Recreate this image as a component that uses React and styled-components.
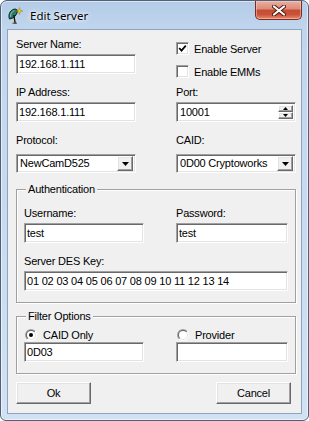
import React from "react";
import styled, { createGlobalStyle } from "styled-components";

const GlobalStyle = createGlobalStyle`
  html, body { margin: 0; padding: 0; background: #ffffff; }
  body {
    width: 309px; height: 421px; overflow: hidden;
    font-family: "Liberation Sans", Arial, sans-serif;
    font-size: 11px; color: #000;
  }
  #root { width: 309px; height: 421px; }
  * { box-sizing: border-box; }
`;

const Window = styled.div`
  width: 309px;
  height: 421px;
  display: flex;
  flex-direction: column;
  padding: 0 6px 6px 6px;
  border: 1px solid #4f6077;
  border-radius: 7px 7px 6px 6px;
  background: linear-gradient(180deg, #b3cbe7 0px, #c1d6ee 28px, #c8dbf0 55%, #d2e2f4 100%);
  box-shadow: inset 0 0 0 1px rgba(255, 255, 255, 0.55);
`;

const TitleBar = styled.div`
  height: 28px;
  display: flex;
  align-items: flex-start;
  flex-shrink: 0;
`;

const AppIcon = styled.svg`
  margin-top: 6px;
  flex-shrink: 0;
`;

const Title = styled.span`
  margin-top: 7px;
  margin-left: 7px;
  font-family: "Noto Sans", "Liberation Sans", sans-serif;
  font-size: 11.5px;
  line-height: 16px;
  color: #000;
  text-shadow: 0 0 6px rgba(255, 255, 255, 0.95), 0 0 3px #fff;
`;

const CloseButton = styled.div`
  margin-left: auto;
  width: 47px;
  height: 19px;
  border: 1px solid #7e2b1f;
  border-top: none;
  border-radius: 0 0 5px 5px;
  background: linear-gradient(180deg, #eab0a2 0%, #dc8a76 45%, #c54b33 50%, #c9533a 75%, #e58b6c 100%);
  box-shadow: inset 0 0 0 1px rgba(255, 220, 210, 0.45);
  display: flex;
  align-items: center;
  justify-content: center;
`;

const Client = styled.div`
  flex: 1;
  background: #f0f0f0;
  border: 1px solid #8ea3bc;
  padding: 8px 6px 0 8px;
  display: flex;
  flex-direction: column;
`;

const TopGrid = styled.div`
  display: grid;
  grid-template-columns: 120px 120px;
  grid-template-rows: 36px 36px auto;
  column-gap: 40px;
  row-gap: 12px;
`;

const Field = styled.div`
  display: flex;
  flex-direction: column;
  grid-column: ${(p) => (p.$span ? "1 / span 2" : "auto")};
`;

const Label = styled.span`
  display: block;
  line-height: 13px;
  height: 13px;
  letter-spacing: -0.2px;
  white-space: nowrap;
  margin-bottom: ${(p) => p.$gap ?? 3}px;
`;

const sunken = `
  border: 1px solid;
  border-color: #a0a0a0 #ffffff #ffffff #a0a0a0;
  box-shadow: inset 1px 1px 0 #696969, inset -1px -1px 0 #e3e3e3;
  background: #ffffff;
`;

const raised = `
  border: 1px solid;
  border-color: #ffffff #696969 #696969 #ffffff;
  box-shadow: inset -1px -1px 0 #a0a0a0, inset 1px 1px 0 #e3e3e3;
  background: #f0f0f0;
`;

const TextBox = styled.input`
  ${sunken}
  display: block;
  width: 100%;
  height: 20px;
  margin: ${(p) => p.$mt ?? 0}px 0 0 0;
  padding: 0 0 0 2px;
  font-family: "Liberation Sans", Arial, sans-serif;
  font-size: 11px;
  letter-spacing: -0.2px;
  color: #000;
  outline: none;
`;

const Combo = styled.div`
  ${sunken}
  height: 19px;
  display: flex;
  align-items: center;
  padding: 2px 2px 2px 3px;
  letter-spacing: -0.2px;
  white-space: nowrap;
`;

const ComboText = styled.span`
  flex: 1;
  overflow: hidden;
  line-height: 13px;
`;

const DropButton = styled.div`
  ${raised}
  width: 16px;
  height: 15px;
  display: flex;
  align-items: center;
  justify-content: center;
  flex-shrink: 0;
`;

const SpinBox = styled.div`
  ${sunken}
  height: 20px;
  display: flex;
  align-items: stretch;
  padding: 2px 2px 2px 3px;
  letter-spacing: -0.2px;
`;

const SpinText = styled.span`
  flex: 1;
  line-height: 14px;
`;

const SpinButtons = styled.div`
  display: flex;
  flex-direction: column;
  width: 15px;
`;

const SpinButton = styled.div`
  ${raised}
  flex: 1;
  display: flex;
  align-items: center;
  justify-content: center;
`;

const CheckList = styled.div`
  display: flex;
  flex-direction: column;
  gap: 10px;
  padding-top: 4px;
`;

const OptionRow = styled.div`
  display: flex;
  align-items: center;
  height: 13px;
  gap: ${(p) => p.$gap ?? 5}px;
  padding-left: ${(p) => p.$indent ?? 0}px;
  letter-spacing: -0.2px;
  white-space: nowrap;
`;

const CheckBox = styled.div`
  ${sunken}
  width: 13px;
  height: 13px;
  flex-shrink: 0;
  display: flex;
  align-items: center;
  justify-content: center;
`;

const Group = styled.fieldset`
  margin: ${(p) => p.$mt}px 0 0 0;
  padding: ${(p) => p.$pt}px 7px ${(p) => p.$pb}px 7px;
  border: 1px solid #a0a0a0;
  box-shadow: inset 1px 1px 0 #ffffff, 1px 1px 0 #ffffff;
  min-width: 0;
  width: 280px;
`;

const Legend = styled.legend`
  padding: 0 2px;
  margin-left: 2px;
  line-height: 13px;
  background: #f0f0f0;
  letter-spacing: -0.2px;
`;

const InnerGrid = styled.div`
  display: grid;
  grid-template-columns: 120px 112px;
  column-gap: 32px;
  row-gap: 12px;
`;

const ButtonRow = styled.div`
  display: flex;
  justify-content: space-between;
  margin-top: 8px;
  padding-right: 4px;
`;

const PushButton = styled.button`
  ${raised}
  width: 75px;
  height: 22px;
  padding: 0;
  font-family: "Liberation Sans", Arial, sans-serif;
  font-size: 11px;
  color: #000;
  letter-spacing: -0.2px;
`;

const DownArrow = ({ w = 7, h = 4 }) => (
  <svg width={w} height={h} viewBox={`0 0 ${w} ${h}`}>
    <polygon points={`0,0 ${w},0 ${w / 2},${h}`} fill="#000" />
  </svg>
);

const UpArrow = ({ w = 5, h = 3 }) => (
  <svg width={w} height={h} viewBox={`0 0 ${w} ${h}`}>
    <polygon points={`0,${h} ${w},${h} ${w / 2},0`} fill="#000" />
  </svg>
);

const Check = ({ checked }) => (
  <CheckBox>
    {checked && (
      <svg width="9" height="9" viewBox="0 0 9 9">
        <polyline points="1.2,4 3.5,6.6 7.8,1.6" fill="none" stroke="#000" strokeWidth="1.7" />
      </svg>
    )}
  </CheckBox>
);

const Radio = ({ id, checked }) => (
  <svg width="12" height="12" viewBox="0 0 12 12" style={{ flexShrink: 0 }}>
    <defs>
      <linearGradient id={`${id}o`} x1="0" y1="0" x2="1" y2="1">
        <stop offset="0.5" stopColor="#a0a0a0" />
        <stop offset="0.5" stopColor="#ffffff" />
      </linearGradient>
      <linearGradient id={`${id}i`} x1="0" y1="0" x2="1" y2="1">
        <stop offset="0.5" stopColor="#696969" />
        <stop offset="0.5" stopColor="#e3e3e3" />
      </linearGradient>
    </defs>
    <circle cx="6" cy="6" r="6" fill={`url(#${id}o)`} />
    <circle cx="6" cy="6" r="5" fill={`url(#${id}i)`} />
    <circle cx="6" cy="6" r="4" fill="#fff" />
    {checked && <circle cx="6" cy="6" r="2" fill="#000" />}
  </svg>
);

export default function App() {
  return (
    <>
      <GlobalStyle />
      <Window>
        <TitleBar>
          <AppIcon width="16" height="17" viewBox="0 0 16 17">
            <path d="M2.5 12 C1 8.5 2.5 3.5 7 2.2 C9.5 1.6 11 3 10.2 5.4 C9.2 8.6 6.5 11.5 2.5 12 Z" fill="#2a7a66" stroke="#0b241d" strokeWidth="1" />
            <path d="M3.6 9.8 C3.4 7 4.8 4.5 7.4 3.5" fill="none" stroke="#7fd0b4" strokeWidth="1" />
            <line x1="6.8" y1="8" x2="8.2" y2="16.5" stroke="#1b1208" strokeWidth="1.4" />
            <line x1="5.5" y1="16.2" x2="10" y2="16.2" stroke="#5a3b12" strokeWidth="1" />
            <polygon points="12.5,0.5 13.3,3.2 15.8,4 13.3,4.8 12.5,7.5 11.7,4.8 9.2,4 11.7,3.2" fill="#f4d414" stroke="#8a6d00" strokeWidth="0.4" />
          </AppIcon>
          <Title>Edit Server</Title>
          <CloseButton>
            <svg width="14" height="11" viewBox="0 0 14 11">
              <path d="M2 1.5 L12 9.5 M12 1.5 L2 9.5" stroke="#4d170d" strokeWidth="4" strokeLinecap="round" />
              <path d="M2 1.5 L12 9.5 M12 1.5 L2 9.5" stroke="#ffffff" strokeWidth="2.2" strokeLinecap="round" />
            </svg>
          </CloseButton>
        </TitleBar>
        <Client>
          <TopGrid>
            <Field>
              <Label>Server Name:</Label>
              <TextBox readOnly value="192.168.1.111" />
            </Field>
            <CheckList>
              <OptionRow>
                <Check checked />
                <span>Enable Server</span>
              </OptionRow>
              <OptionRow>
                <Check />
                <span>Enable EMMs</span>
              </OptionRow>
            </CheckList>
            <Field>
              <Label>IP Address:</Label>
              <TextBox readOnly value="192.168.1.111" />
            </Field>
            <Field>
              <Label>Port:</Label>
              <SpinBox>
                <SpinText>10001</SpinText>
                <SpinButtons>
                  <SpinButton>
                    <UpArrow />
                  </SpinButton>
                  <SpinButton>
                    <DownArrow w={5} h={3} />
                  </SpinButton>
                </SpinButtons>
              </SpinBox>
            </Field>
            <Field>
              <Label $gap={7}>Protocol:</Label>
              <Combo>
                <ComboText>NewCamD525</ComboText>
                <DropButton>
                  <DownArrow />
                </DropButton>
              </Combo>
            </Field>
            <Field>
              <Label $gap={7}>CAID:</Label>
              <Combo>
                <ComboText>0D00 Cryptoworks</ComboText>
                <DropButton>
                  <DownArrow />
                </DropButton>
              </Combo>
            </Field>
          </TopGrid>

          <Group $mt={10} $pt={11} $pb={11}>
            <Legend>Authentication</Legend>
            <InnerGrid>
              <Field>
                <Label>Username:</Label>
                <TextBox readOnly value="test" />
              </Field>
              <Field>
                <Label>Password:</Label>
                <TextBox readOnly value="test" />
              </Field>
              <Field $span>
                <Label>Server DES Key:</Label>
                <TextBox readOnly value="01 02 03 04 05 06 07 08 09 10 11 12 13 14" />
              </Field>
            </InnerGrid>
          </Group>

          <Group $mt={7} $pt={5} $pb={11}>
            <Legend>Filter Options</Legend>
            <InnerGrid>
              <Field>
                <OptionRow $gap={6} $indent={1}>
                  <Radio id="r1" checked />
                  <span>CAID Only</span>
                </OptionRow>
                <TextBox readOnly value="0D03" $mt={1} />
              </Field>
              <Field>
                <OptionRow $gap={6} $indent={1}>
                  <Radio id="r2" />
                  <span>Provider</span>
                </OptionRow>
                <TextBox readOnly value="" $mt={1} />
              </Field>
            </InnerGrid>
          </Group>

          <ButtonRow>
            <PushButton>Ok</PushButton>
            <PushButton>Cancel</PushButton>
          </ButtonRow>
        </Client>
      </Window>
    </>
  );
}
